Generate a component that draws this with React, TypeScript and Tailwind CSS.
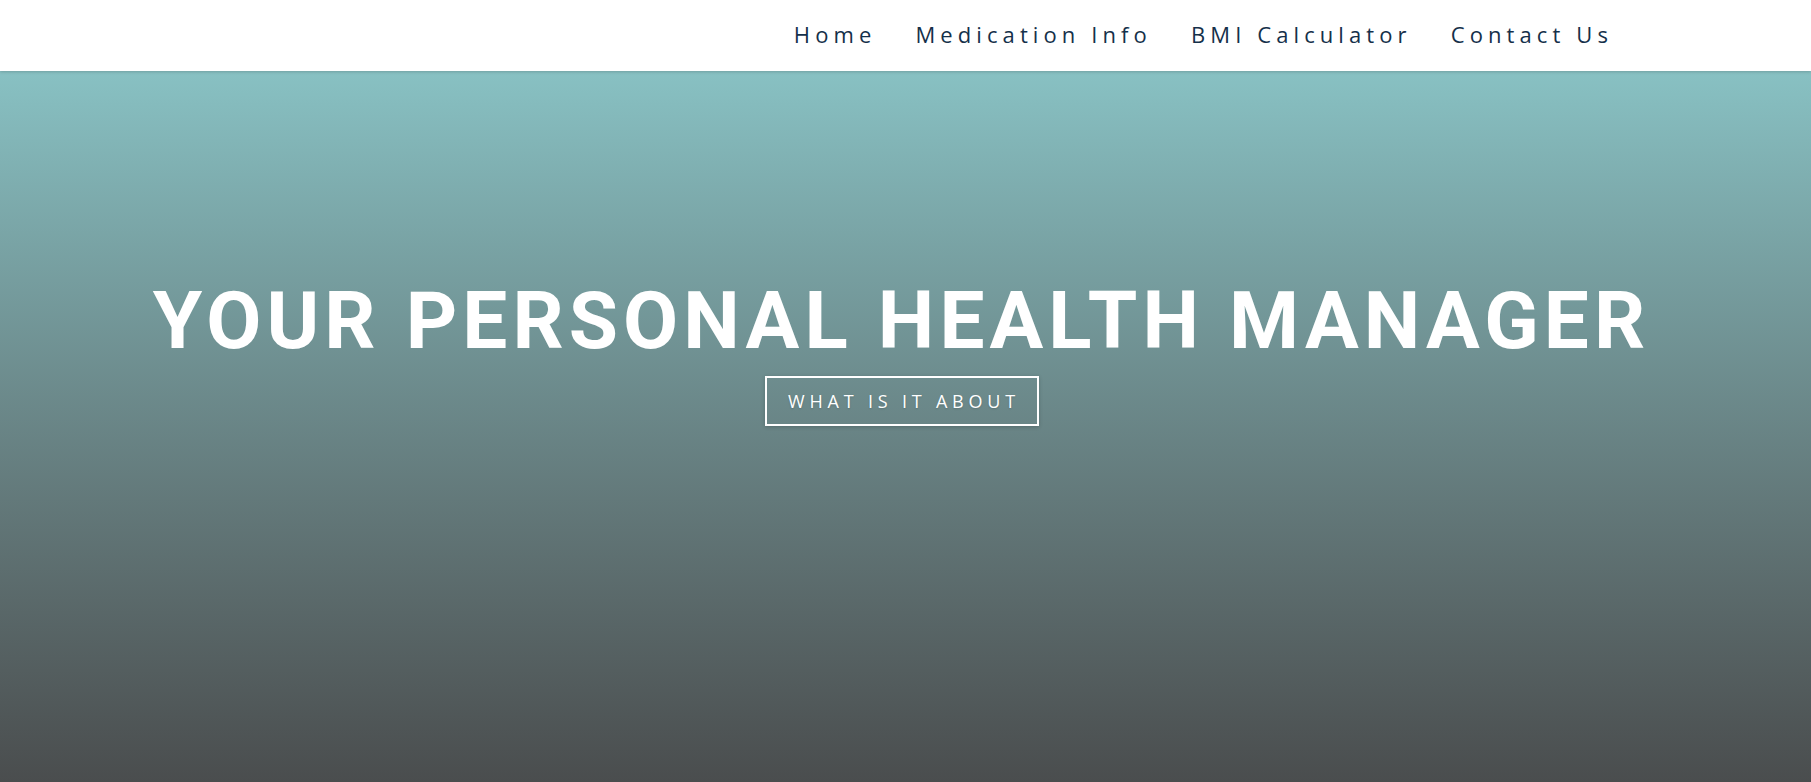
import React from "react";

export default function App() {
  const links = ["Home", "Medication Info", "BMI Calculator", "Contact Us"];
  return (
    <div className="w-full h-[782px] flex flex-col overflow-hidden" style={{ fontFamily: "'Open Sans', sans-serif" }}>
      <header className="relative z-10 h-[71px] bg-white flex items-center justify-end pr-[198px] pb-[3px] shadow-[0_1px_3px_rgba(0,0,0,0.18)]">
        <nav className="flex items-center gap-[39px]">
          {links.map((l) => (
            <a
              key={l}
              className="text-[22px] leading-[22px] tracking-[5.1px] text-[#15304a] whitespace-nowrap"
              style={{ fontFamily: "'Open Sans', sans-serif" }}
            >
              {l}
            </a>
          ))}
        </nav>
      </header>
      <main className="flex-1 bg-gradient-to-b from-[#88c1c3] to-[#4a4d4e] flex flex-col items-center pt-[210px]">
        <div className="flex flex-col items-center translate-x-[-4px]">
          <h1
            className="text-[80px] leading-[80px] font-bold tracking-[5.1px] text-white whitespace-nowrap"
            style={{ fontFamily: "Roboto, sans-serif" }}
          >
            YOUR PERSONAL HEALTH MANAGER
          </h1>
          <a className="mt-[15px] h-[50px] w-[274px] border-2 border-white flex items-center justify-center pl-[5px] text-[18px] leading-[18px] tracking-[4.8px] text-white shadow-[0_1px_4px_rgba(0,0,0,0.2)] [text-shadow:0_1px_2px_rgba(0,0,0,0.15)]">
            WHAT IS IT ABOUT
          </a>
        </div>
      </main>
    </div>
  );
}
